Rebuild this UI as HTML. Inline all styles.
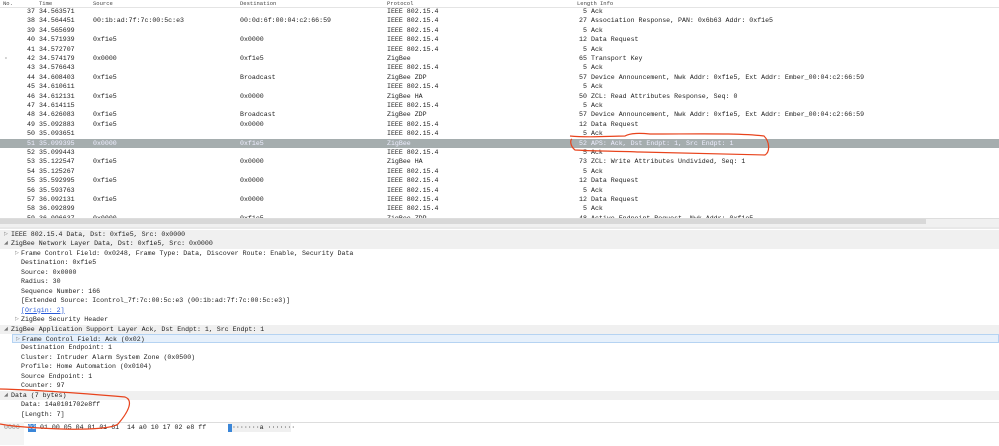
<!DOCTYPE html>
<html><head><meta charset="utf-8"><style>
body{margin:0;width:999px;height:445px;overflow:hidden;background:#fff;font-family:"Liberation Mono",monospace;font-size:6.6px;color:#222;position:relative}
.hdr{position:absolute;left:0;top:0;width:999px;height:7px;background:#fff;border-bottom:1px solid #e4e4e4;font-size:5.5px;color:#444}
.hdr span,.r span,.d span{position:absolute;top:0;white-space:pre}
.r{position:absolute;left:0;width:999px;height:9.4px;line-height:9.4px}
.sel{background:#a5adae;color:#eef}
.d{position:absolute;left:0;width:999px;height:9.4px;line-height:9.4px;white-space:pre}
.g{background:#f0f0f0}
.fb{background:#e6f0fb;border:1px solid #b5d3f2;box-sizing:border-box}
.ar{color:#777;font-size:5px}
</style></head><body>
<div class="hdr"><span style="left:3px">No.</span><span style="left:39px">Time</span><span style="left:93px">Source</span><span style="left:240px">Destination</span><span style="left:387px">Protocol</span><span style="left:577px">Length</span><span style="left:600px">Info</span></div>
<div id="list"></div>
<div style="position:absolute;left:0;top:218px;width:999px;height:9px;background:#f0f0f0;border-top:1px solid #ddd"></div>
<div style="position:absolute;left:0;top:219px;width:926px;height:5px;background:#d8d8d8"></div>
<div style="position:absolute;left:0;top:227px;width:999px;height:2px;background:#e8e8e8"></div>
<div id="det"></div>
<div style="position:absolute;left:0;top:422px;width:999px;height:23px;background:#fff;border-top:1px solid #ddd"></div>
<div style="position:absolute;left:0;top:422px;width:24px;height:23px;background:#f4f4f4"></div>
<div class="d" style="top:423px;left:4px;color:#888">0000</div>
<div class="d" style="top:423px;left:40px">01 00 05 04 01 01 61  14 a0 10 17 02 e8 ff</div>
<div style="position:absolute;left:28px;top:424px;width:8px;height:8px;background:#3a86d8;color:#fff;line-height:8px">02</div>
<div class="d" style="top:423px;left:228px;width:63px;background:#f0f0f0"> ·······a ·······</div>
<div style="position:absolute;left:228px;top:424px;width:4px;height:8px;background:#3a86d8"></div>
<svg width="999" height="445" style="position:absolute;left:0;top:0" fill="none" stroke="#e8431c" stroke-width="1.2">
<path d="M570 136 C590 138 610 136 625 136 C630 133 640 133 650 134 C700 134 740 133 764 136 C770 142 770 152 765 155 C720 154 680 153 640 152 C610 151 590 151 575 150 C570 146 570 140 572 139"/>
<path d="M0 389 C40 390 90 394 125 397 C133 400 130 410 118 424 C110 430 70 430 40 428 C20 427 5 425 0 424"/>
</svg>
<script>
const L=document.getElementById('list');
const rows=[
["37","34.563571","","","IEEE 802.15.4","5","Ack"],
["38","34.564451","00:1b:ad:7f:7c:00:5c:e3","00:0d:6f:00:04:c2:66:59","IEEE 802.15.4","27","Association Response, PAN: 0x6b63 Addr: 0xf1e5"],
["39","34.565699","","","IEEE 802.15.4","5","Ack"],
["40","34.571939","0xf1e5","0x0000","IEEE 802.15.4","12","Data Request"],
["41","34.572707","","","IEEE 802.15.4","5","Ack"],
["42","34.574179","0x0000","0xf1e5","ZigBee","65","Transport Key"],
["43","34.576643","","","IEEE 802.15.4","5","Ack"],
["44","34.608403","0xf1e5","Broadcast","ZigBee ZDP","57","Device Announcement, Nwk Addr: 0xf1e5, Ext Addr: Ember_00:04:c2:66:59"],
["45","34.610611","","","IEEE 802.15.4","5","Ack"],
["46","34.612131","0xf1e5","0x0000","ZigBee HA","50","ZCL: Read Attributes Response, Seq: 0"],
["47","34.614115","","","IEEE 802.15.4","5","Ack"],
["48","34.626083","0xf1e5","Broadcast","ZigBee ZDP","57","Device Announcement, Nwk Addr: 0xf1e5, Ext Addr: Ember_00:04:c2:66:59"],
["49","35.092883","0xf1e5","0x0000","IEEE 802.15.4","12","Data Request"],
["50","35.093651","","","IEEE 802.15.4","5","Ack"],
["51","35.099395","0x0000","0xf1e5","ZigBee","52","APS: Ack, Dst Endpt: 1, Src Endpt: 1"],
["52","35.099443","","","IEEE 802.15.4","5","Ack"],
["53","35.122547","0xf1e5","0x0000","ZigBee HA","73","ZCL: Write Attributes Undivided, Seq: 1"],
["54","35.125267","","","IEEE 802.15.4","5","Ack"],
["55","35.592995","0xf1e5","0x0000","IEEE 802.15.4","12","Data Request"],
["56","35.593763","","","IEEE 802.15.4","5","Ack"],
["57","36.092131","0xf1e5","0x0000","IEEE 802.15.4","12","Data Request"],
["58","36.092899","","","IEEE 802.15.4","5","Ack"],
["59","36.096637","0x0000","0xf1e5","ZigBee ZDP","48","Active Endpoint Request, Nwk Addr: 0xf1e5"]];
rows.forEach((r,i)=>{const d=document.createElement('div');d.className='r'+(r[0]=="51"?' sel':'');d.style.top=(7+i*9.4)+'px';
d.innerHTML=`<span style="left:${35-r[0].length*4}px">${r[0]}</span><span style="left:39px">${r[1]}</span><span style="left:93px">${r[2]}</span><span style="left:240px">${r[3]}</span><span style="left:387px">${r[4]}</span><span style="left:${587-r[5].length*4}px">${r[5]}</span><span style="left:591px">${r[6]}</span>`+(r[0]=="42"?'<span style="left:4px">·</span>':'');L.appendChild(d);});
const D=document.getElementById('det');
// [class, level(0 top,1 child), arrow(''|'c'|'o'), text]
const det=[
["g",0,"c","IEEE 802.15.4 Data, Dst: 0xf1e5, Src: 0x0000"],
["g",0,"o","ZigBee Network Layer Data, Dst: 0xf1e5, Src: 0x0000"],
["",1,"c","Frame Control Field: 0x0248, Frame Type: Data, Discover Route: Enable, Security Data"],
["",1,"","Destination: 0xf1e5"],["",1,"","Source: 0x0000"],["",1,"","Radius: 30"],["",1,"","Sequence Number: 166"],
["",1,"","[Extended Source: Icontrol_7f:7c:00:5c:e3 (00:1b:ad:7f:7c:00:5c:e3)]"],
["o",1,"","[Origin: 2]"],
["",1,"c","ZigBee Security Header"],
["g",0,"o","ZigBee Application Support Layer Ack, Dst Endpt: 1, Src Endpt: 1"],
["fb",1,"c","Frame Control Field: Ack (0x02)"],
["",1,"","Destination Endpoint: 1"],["",1,"","Cluster: Intruder Alarm System Zone (0x0500)"],["",1,"","Profile: Home Automation (0x0104)"],["",1,"","Source Endpoint: 1"],["",1,"","Counter: 97"],
["g",0,"o","Data (7 bytes)"],["",1,"","Data: 14a0101702e8ff"],["",1,"","[Length: 7]"]];
det.forEach((r,i)=>{const d=document.createElement('div');d.className='d '+(r[0]=='g'?'g':r[0]=='fb'?'fb':'');d.style.top=(230+i*9.45)+'px';
let off=0;if(r[0]=='fb'){d.style.left='12px';d.style.width='987px';off=-12;}
const ax=(r[1]?15:4)+off, tx=(r[1]?21:11)+off;
let h='';if(r[2])h+=`<span class="ar" style="left:${ax}px">${r[2]=='c'?'▷':'◢'}</span>`;
const t=r[0]=='o'?'<span style="color:#2a5bd7;text-decoration:underline;position:static">'+r[3]+'</span>':r[3];
h+=`<span style="left:${tx}px">${t}</span>`;d.innerHTML=h;D.appendChild(d);});
</script>
</body></html>
